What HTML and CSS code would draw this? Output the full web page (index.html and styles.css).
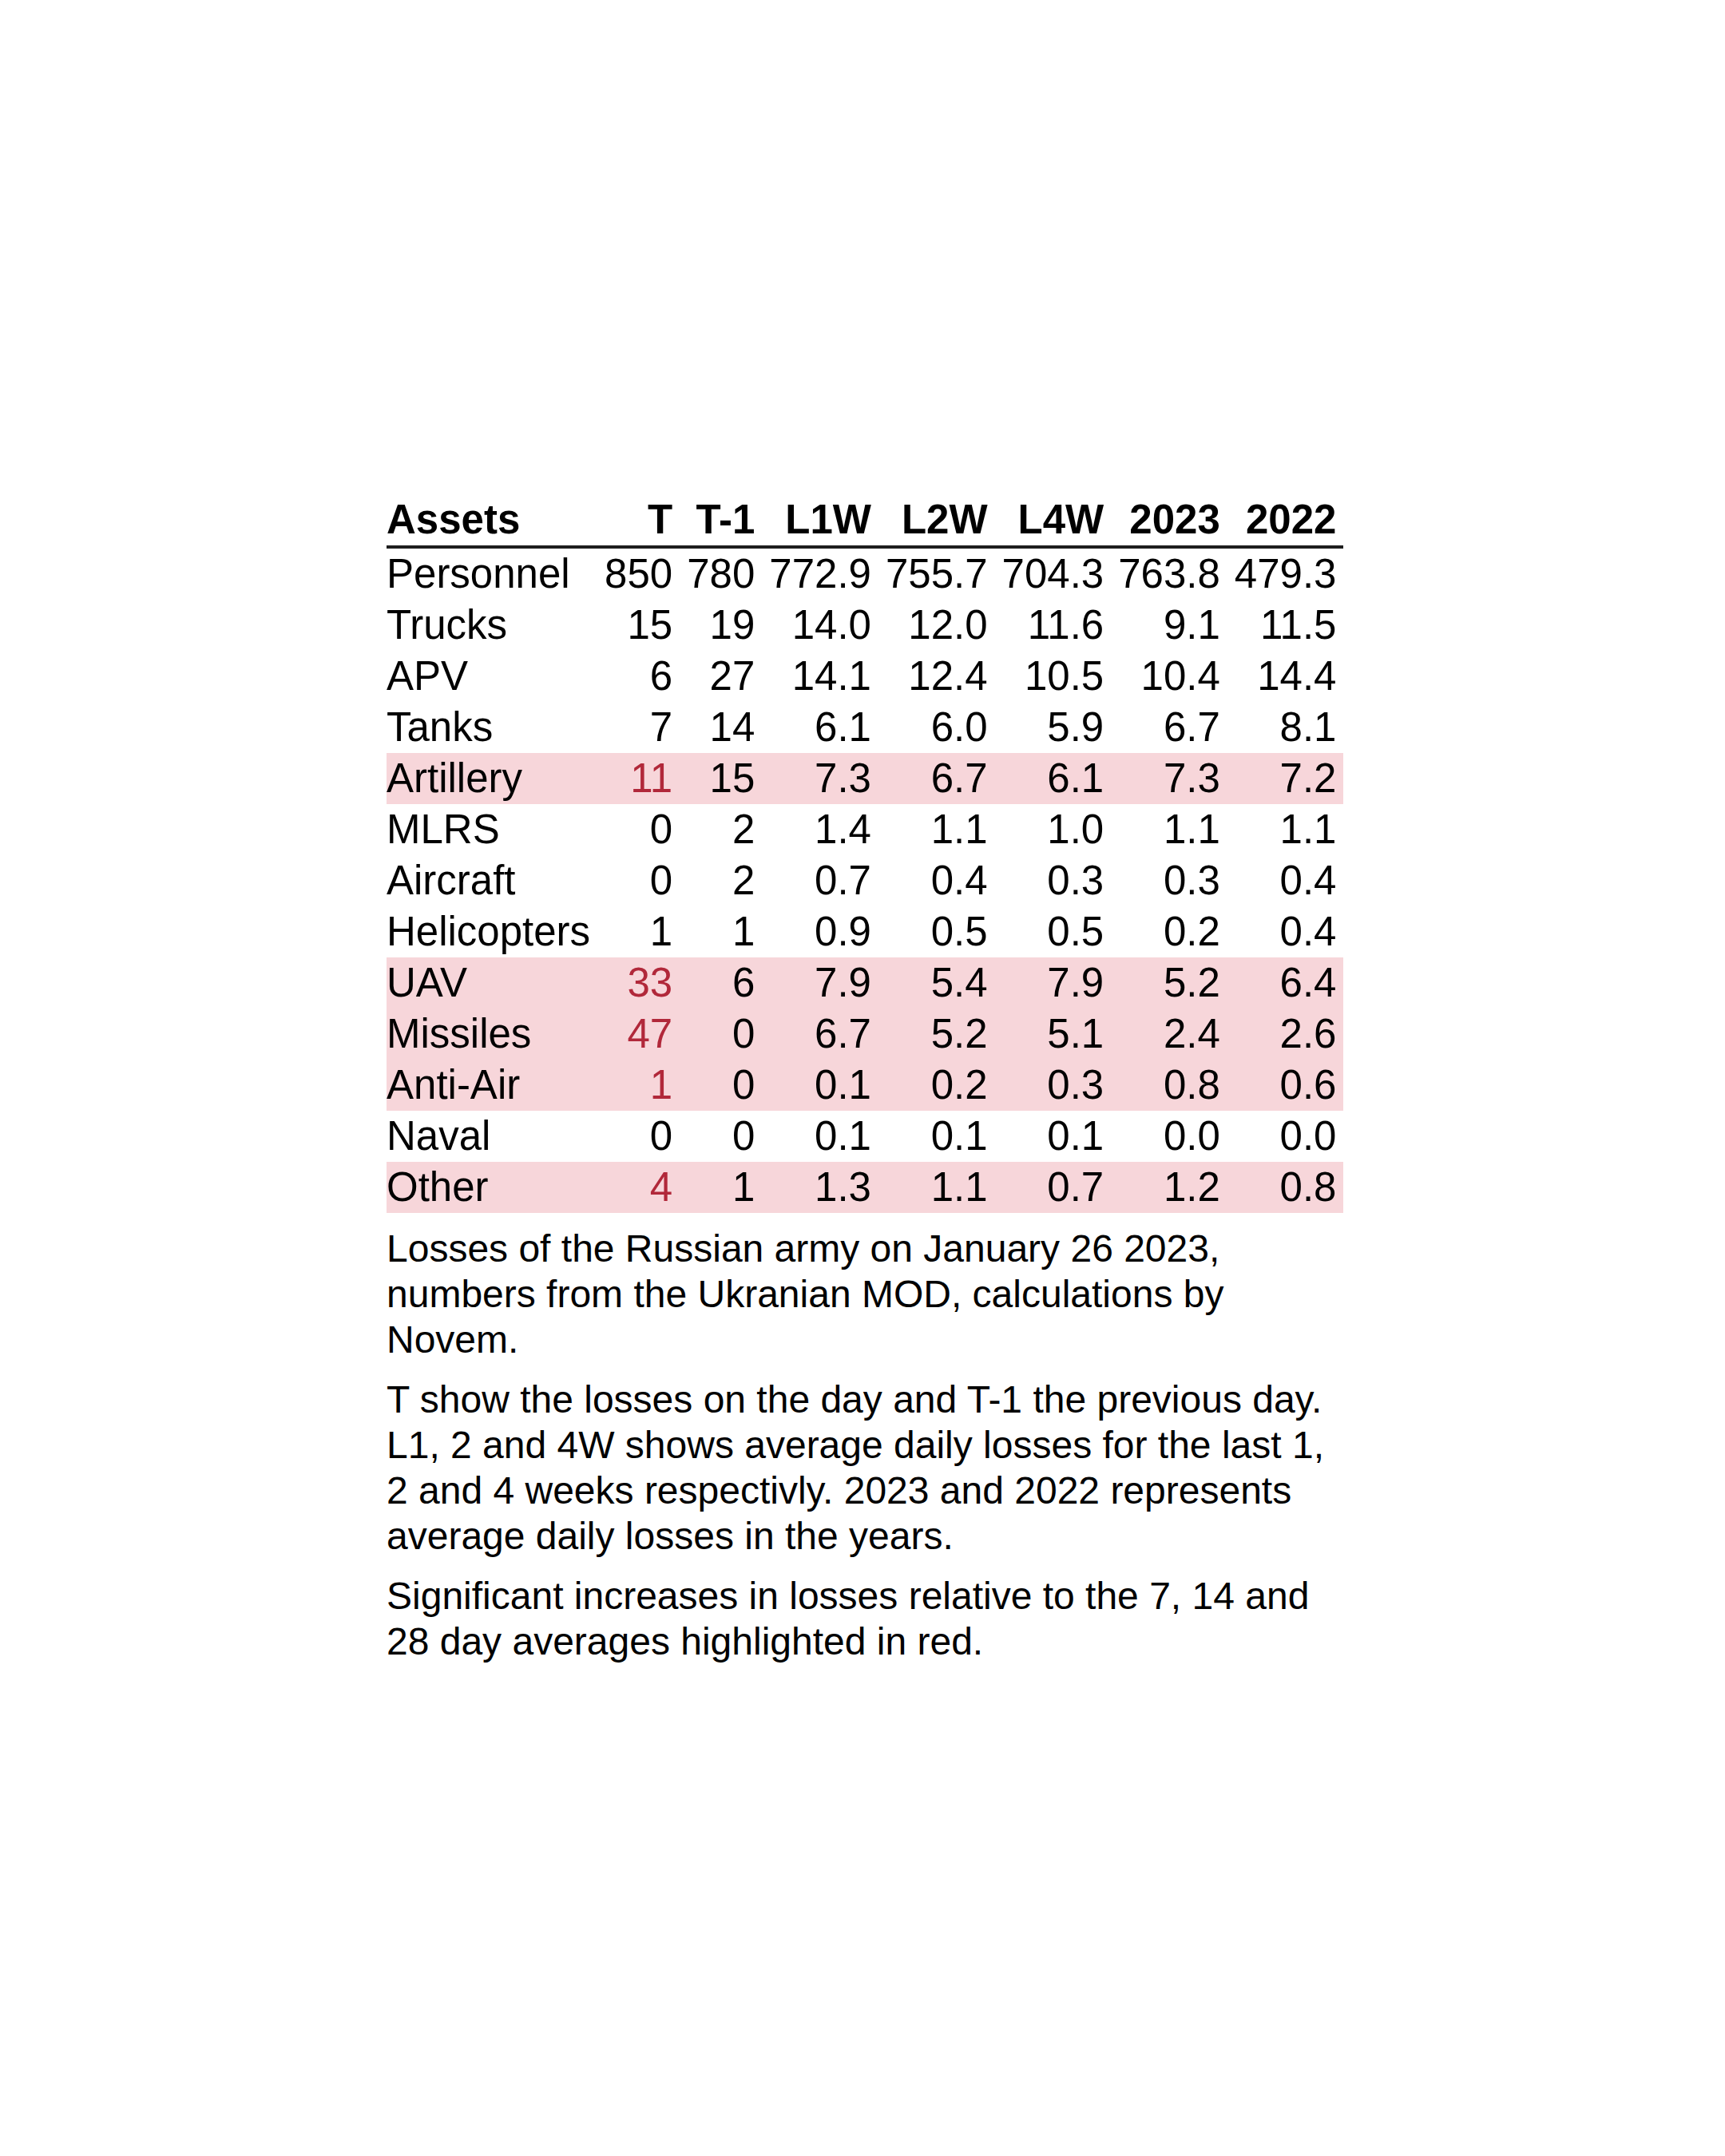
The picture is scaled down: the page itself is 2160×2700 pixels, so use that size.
FILE: index.html
```html
<!DOCTYPE html>
<html lang="en">
<head>
<meta charset="utf-8">
<title>Losses of the Russian army</title>
<link rel="stylesheet" href="styles.css">
</head>
<body>
<div class="figure">
  <table class="losses">
    <thead>
      <tr>
        <th class="name">Assets</th>
        <th>T</th>
        <th>T-1</th>
        <th>L1W</th>
        <th>L2W</th>
        <th>L4W</th>
        <th>2023</th>
        <th>2022</th>
      </tr>
    </thead>
    <tbody>
      <tr><td class="name">Personnel</td><td>850</td><td>780</td><td>772.9</td><td>755.7</td><td>704.3</td><td>763.8</td><td>479.3</td></tr>
      <tr><td class="name">Trucks</td><td>15</td><td>19</td><td>14.0</td><td>12.0</td><td>11.6</td><td>9.1</td><td>11.5</td></tr>
      <tr><td class="name">APV</td><td>6</td><td>27</td><td>14.1</td><td>12.4</td><td>10.5</td><td>10.4</td><td>14.4</td></tr>
      <tr><td class="name">Tanks</td><td>7</td><td>14</td><td>6.1</td><td>6.0</td><td>5.9</td><td>6.7</td><td>8.1</td></tr>
      <tr class="hot"><td class="name">Artillery</td><td class="up">11</td><td>15</td><td>7.3</td><td>6.7</td><td>6.1</td><td>7.3</td><td>7.2</td></tr>
      <tr><td class="name">MLRS</td><td>0</td><td>2</td><td>1.4</td><td>1.1</td><td>1.0</td><td>1.1</td><td>1.1</td></tr>
      <tr><td class="name">Aircraft</td><td>0</td><td>2</td><td>0.7</td><td>0.4</td><td>0.3</td><td>0.3</td><td>0.4</td></tr>
      <tr><td class="name">Helicopters</td><td>1</td><td>1</td><td>0.9</td><td>0.5</td><td>0.5</td><td>0.2</td><td>0.4</td></tr>
      <tr class="hot"><td class="name">UAV</td><td class="up">33</td><td>6</td><td>7.9</td><td>5.4</td><td>7.9</td><td>5.2</td><td>6.4</td></tr>
      <tr class="hot"><td class="name">Missiles</td><td class="up">47</td><td>0</td><td>6.7</td><td>5.2</td><td>5.1</td><td>2.4</td><td>2.6</td></tr>
      <tr class="hot"><td class="name">Anti-Air</td><td class="up">1</td><td>0</td><td>0.1</td><td>0.2</td><td>0.3</td><td>0.8</td><td>0.6</td></tr>
      <tr><td class="name">Naval</td><td>0</td><td>0</td><td>0.1</td><td>0.1</td><td>0.1</td><td>0.0</td><td>0.0</td></tr>
      <tr class="hot"><td class="name">Other</td><td class="up">4</td><td>1</td><td>1.3</td><td>1.1</td><td>0.7</td><td>1.2</td><td>0.8</td></tr>
    </tbody>
  </table>
  <div class="notes">
    <p>Losses of the Russian army on January 26 2023, numbers from the Ukranian MOD, calculations by Novem.</p>
    <p>T show the losses on the day and T-1 the previous day. L1, 2 and 4W shows average daily losses for the last 1, 2 and 4 weeks respectivly. 2023 and 2022 represents average daily losses in the years.</p>
    <p>Significant increases in losses relative to the 7, 14 and 28 day averages highlighted in red.</p>
  </div>
</div>
</body>
</html>
```

FILE: styles.css
```css
html, body {
  margin: 0;
  padding: 0;
  background: #ffffff;
}

body {
  font-family: "Liberation Sans", Arial, sans-serif;
  color: #000000;
}

.figure {
  width: 1196px;
  margin: 619px 0 0 484px;
}

.losses {
  border-collapse: separate;
  border-spacing: 0;
  width: 100%;
  font-size: 51px;
  line-height: 64px;
}

.losses th,
.losses td {
  padding: 0 9px;
  text-align: right;
  white-space: nowrap;
  vertical-align: middle;
}

.losses th {
  font-weight: 700;
  border-bottom: 4px solid #1e1e1e;
}

.losses .name {
  text-align: left;
  padding-left: 0;
}

.losses tr.hot td {
  background: #f7d6da;
}

.losses td.up {
  color: #b1283a;
}

.notes {
  margin-top: 16px;
  font-size: 48px;
  line-height: 57px;
}

.notes p {
  margin: 0 0 18px;
}
```
